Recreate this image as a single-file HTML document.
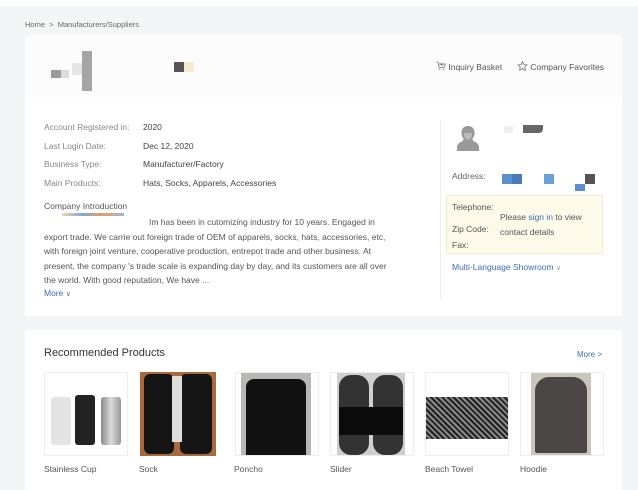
<!DOCTYPE html>
<html><head><meta charset="utf-8"><style>
*{margin:0;padding:0;box-sizing:border-box}
body{width:638px;height:489px;background:#f4f5f7;font-family:"Liberation Sans",sans-serif;position:relative;overflow:hidden;color:#444}
.a{position:absolute;white-space:nowrap}
.card{position:absolute;background:#fff}
.s{font-size:8.5px}
.l{color:#888}
.b{color:#3f6db3}
.blk{position:absolute}
.pi{position:absolute;top:372px;width:84px;height:84px;border:1px solid #eee;background:#fff;overflow:hidden}
.pl{position:absolute;top:464px;font-size:8.5px;color:#555}
</style></head><body>
<div class="a" style="left:0;top:0;width:638px;height:6px;background:#fff"></div>
<div class="a s" style="left:25px;top:20px;color:#666;font-size:7.5px">Home &nbsp;&gt;&nbsp; Manufacturers/Suppliers</div>

<div class="card" style="left:25px;top:35px;width:597px;height:281px"></div>
<div class="a" style="left:25px;top:35px;width:597px;height:62px;background:#fcfcfd"></div>
<div class="blk" style="left:51px;top:70px;width:10px;height:8px;background:#9a9a9a"></div>
<div class="blk" style="left:61px;top:70px;width:8px;height:8px;background:#ddd"></div>
<div class="blk" style="left:72px;top:63px;width:10px;height:12px;background:#e6e6e6"></div>
<div class="blk" style="left:82px;top:51px;width:10px;height:40px;background:#a5a5a5"></div>
<div class="blk" style="left:174px;top:62px;width:10px;height:10px;background:#555"></div>
<div class="blk" style="left:184px;top:62px;width:10px;height:10px;background:#f3ead0"></div>
<div class="a s" style="left:436px;top:61px;color:#555">
<svg width="10" height="10" viewBox="0 0 10 10" style="vertical-align:-1px"><path d="M0.5 1H2l1.2 5.5h5L9.3 3H3" fill="none" stroke="#777" stroke-width=".8"/><path d="M5.7 2v3M4.2 3.5h3" stroke="#777" stroke-width=".8"/><circle cx="3.8" cy="8.3" r=".7" fill="#777"/><circle cx="7.6" cy="8.3" r=".7" fill="#777"/></svg> Inquiry Basket</div>
<div class="a s" style="left:517px;top:61px;color:#555">
<svg width="11" height="10" viewBox="0 0 11 10" style="vertical-align:-1px"><path d="M5.5 0.6l1.4 3 3.2.3-2.4 2.1.7 3.2-2.9-1.7-2.9 1.7.7-3.2L.9 3.9l3.2-.3z" fill="none" stroke="#777" stroke-width=".8"/></svg> Company Favorites</div>

<div class="a s l" style="left:44px;top:122px">Account Registered in:</div><div class="a s" style="left:143px;top:122px">2020</div>
<div class="a s l" style="left:44px;top:141px">Last Login Date:</div><div class="a s" style="left:143px;top:141px">Dec 12, 2020</div>
<div class="a s l" style="left:44px;top:159px">Business Type:</div><div class="a s" style="left:143px;top:159px">Manufacturer/Factory</div>
<div class="a s l" style="left:44px;top:178px">Main Products:</div><div class="a s" style="left:143px;top:178px">Hats, Socks, Apparels, Accessories</div>
<div class="a s" style="left:44px;top:201px;color:#555">Company Introduction</div>
<div class="blk" style="left:62px;top:213px;width:62px;height:3px;background:linear-gradient(90deg,#f0d7a0,#7fa9d8,#e8a060,#9bc)"></div>
<div class="a s" style="left:44px;top:215px;line-height:14.5px;white-space:normal;width:345px;color:#555"><span style="padding-left:105px"></span>Im has been in cutomizing industry for 10 years. Engaged in export trade. We carrie out foreign trade of OEM of apparels, socks, hats, accessories, etc, with foreign joint venture, cooperative production, entrepot trade and other business. At present, the company 's trade scale is expanding day by day, and its customers are all over the world. With good reputation, We have ...</div>
<div class="a s b" style="left:44px;top:288px">More <span style="font-size:7px">∨</span></div>

<div class="blk" style="left:440px;top:120px;width:1px;height:180px;background:#eee"></div>
<svg class="blk" style="left:455px;top:124px" width="26" height="27" viewBox="0 0 26 27"><path d="M13 2c-5 0-7 4-6.5 8 .2 2 1 3.5 2 4.5L8 17c-3 1-6 3-6 6v4h22v-4c0-3-3-5-6-6l-.5-2.5c1-1 1.8-2.5 2-4.5C20 6 18 2 13 2z" fill="#999"/><path d="M9 9c0 4 1.8 6.5 4 6.5S17 13 17 9" fill="#bbb"/></svg>
<div class="blk" style="left:504px;top:126px;width:9px;height:7px;background:#eef0f4"></div>
<div class="blk" style="left:523px;top:125px;width:20px;height:8px;background:#666;border-radius:0 0 4px 0"></div>
<div class="a s l" style="left:452px;top:171px;color:#666">Address:</div>
<div class="blk" style="left:502px;top:174px;width:10px;height:10px;background:#5b8fcf"></div>
<div class="blk" style="left:512px;top:174px;width:10px;height:10px;background:#4a7bb8"></div>
<div class="blk" style="left:544px;top:174px;width:10px;height:10px;background:#6aa0d4"></div>
<div class="blk" style="left:585px;top:174px;width:10px;height:10px;background:#555"></div>
<div class="blk" style="left:575px;top:184px;width:10px;height:7px;background:#5b8fcf"></div>
<div class="blk" style="left:446px;top:195px;width:157px;height:59px;background:#fdfaea;border:1px solid #f3edd2"></div>
<div class="a s" style="left:452px;top:202px;color:#555">Telephone:</div>
<div class="a s" style="left:452px;top:224px;color:#555">Zip Code:</div>
<div class="a s" style="left:452px;top:240px;color:#555">Fax:</div>
<div class="a s" style="left:500px;top:210px;color:#555;line-height:15px">Please <span class="b">sign in</span> to view<br>contact details</div>
<div class="a s b" style="left:452px;top:262px">Multi-Language Showroom <span style="font-size:7px;color:#999">∨</span></div>

<div class="card" style="left:25px;top:330px;width:597px;height:160px"></div>
<div class="a" style="left:44px;top:347px;font-size:11px;color:#333">Recommended Products</div>
<div class="a b" style="left:577px;top:350px;font-size:8px">More &gt;</div>

<div class="pi" style="left:44px"><div class="blk" style="left:6px;top:24px;width:20px;height:48px;background:#e4e4e4;border-radius:3px"></div><div class="blk" style="left:30px;top:22px;width:20px;height:50px;background:#222;border-radius:3px"></div><div class="blk" style="left:56px;top:24px;width:20px;height:48px;background:linear-gradient(90deg,#888,#ddd,#999);border-radius:3px"></div></div>
<div class="pi" style="left:140px;border:none"><div class="blk" style="left:0;top:0;width:76px;height:84px;background:#a86a3c"></div><div class="blk" style="left:4px;top:2px;width:30px;height:80px;background:#151515;border-radius:6px"></div><div class="blk" style="left:40px;top:2px;width:32px;height:80px;background:#151515;border-radius:6px"></div><div class="blk" style="left:32px;top:4px;width:10px;height:66px;background:#ddd"></div></div>
<div class="pi" style="left:235px"><div class="blk" style="left:5px;top:0;width:70px;height:84px;background:#b5b8b5"></div><div class="blk" style="left:10px;top:6px;width:60px;height:78px;background:#111;border-radius:8px 8px 0 0"></div></div>
<div class="pi" style="left:330px"><div class="blk" style="left:6px;top:0;width:68px;height:84px;background:#cfcfcf"></div><div class="blk" style="left:8px;top:2px;width:30px;height:80px;background:#333;border-radius:12px"></div><div class="blk" style="left:42px;top:2px;width:30px;height:80px;background:#333;border-radius:12px"></div><div class="blk" style="left:8px;top:34px;width:64px;height:28px;background:#0b0b0b"></div></div>
<div class="pi" style="left:425px"><div class="blk" style="left:0;top:24px;width:84px;height:42px;background:repeating-linear-gradient(45deg,#222 0 2px,#888 2px 4px)"></div></div>
<div class="pi" style="left:520px"><div class="blk" style="left:10px;top:0;width:60px;height:84px;background:#cbc6bd"></div><div class="blk" style="left:14px;top:4px;width:52px;height:76px;background:#4a4745;border-radius:14px 14px 2px 2px"></div></div>

<div class="pl" style="left:44px">Stainless Cup</div>
<div class="pl" style="left:139px">Sock</div>
<div class="pl" style="left:234px">Poncho</div>
<div class="pl" style="left:330px">Slider</div>
<div class="pl" style="left:425px">Beach Towel</div>
<div class="pl" style="left:520px">Hoodie</div>
</body></html>
